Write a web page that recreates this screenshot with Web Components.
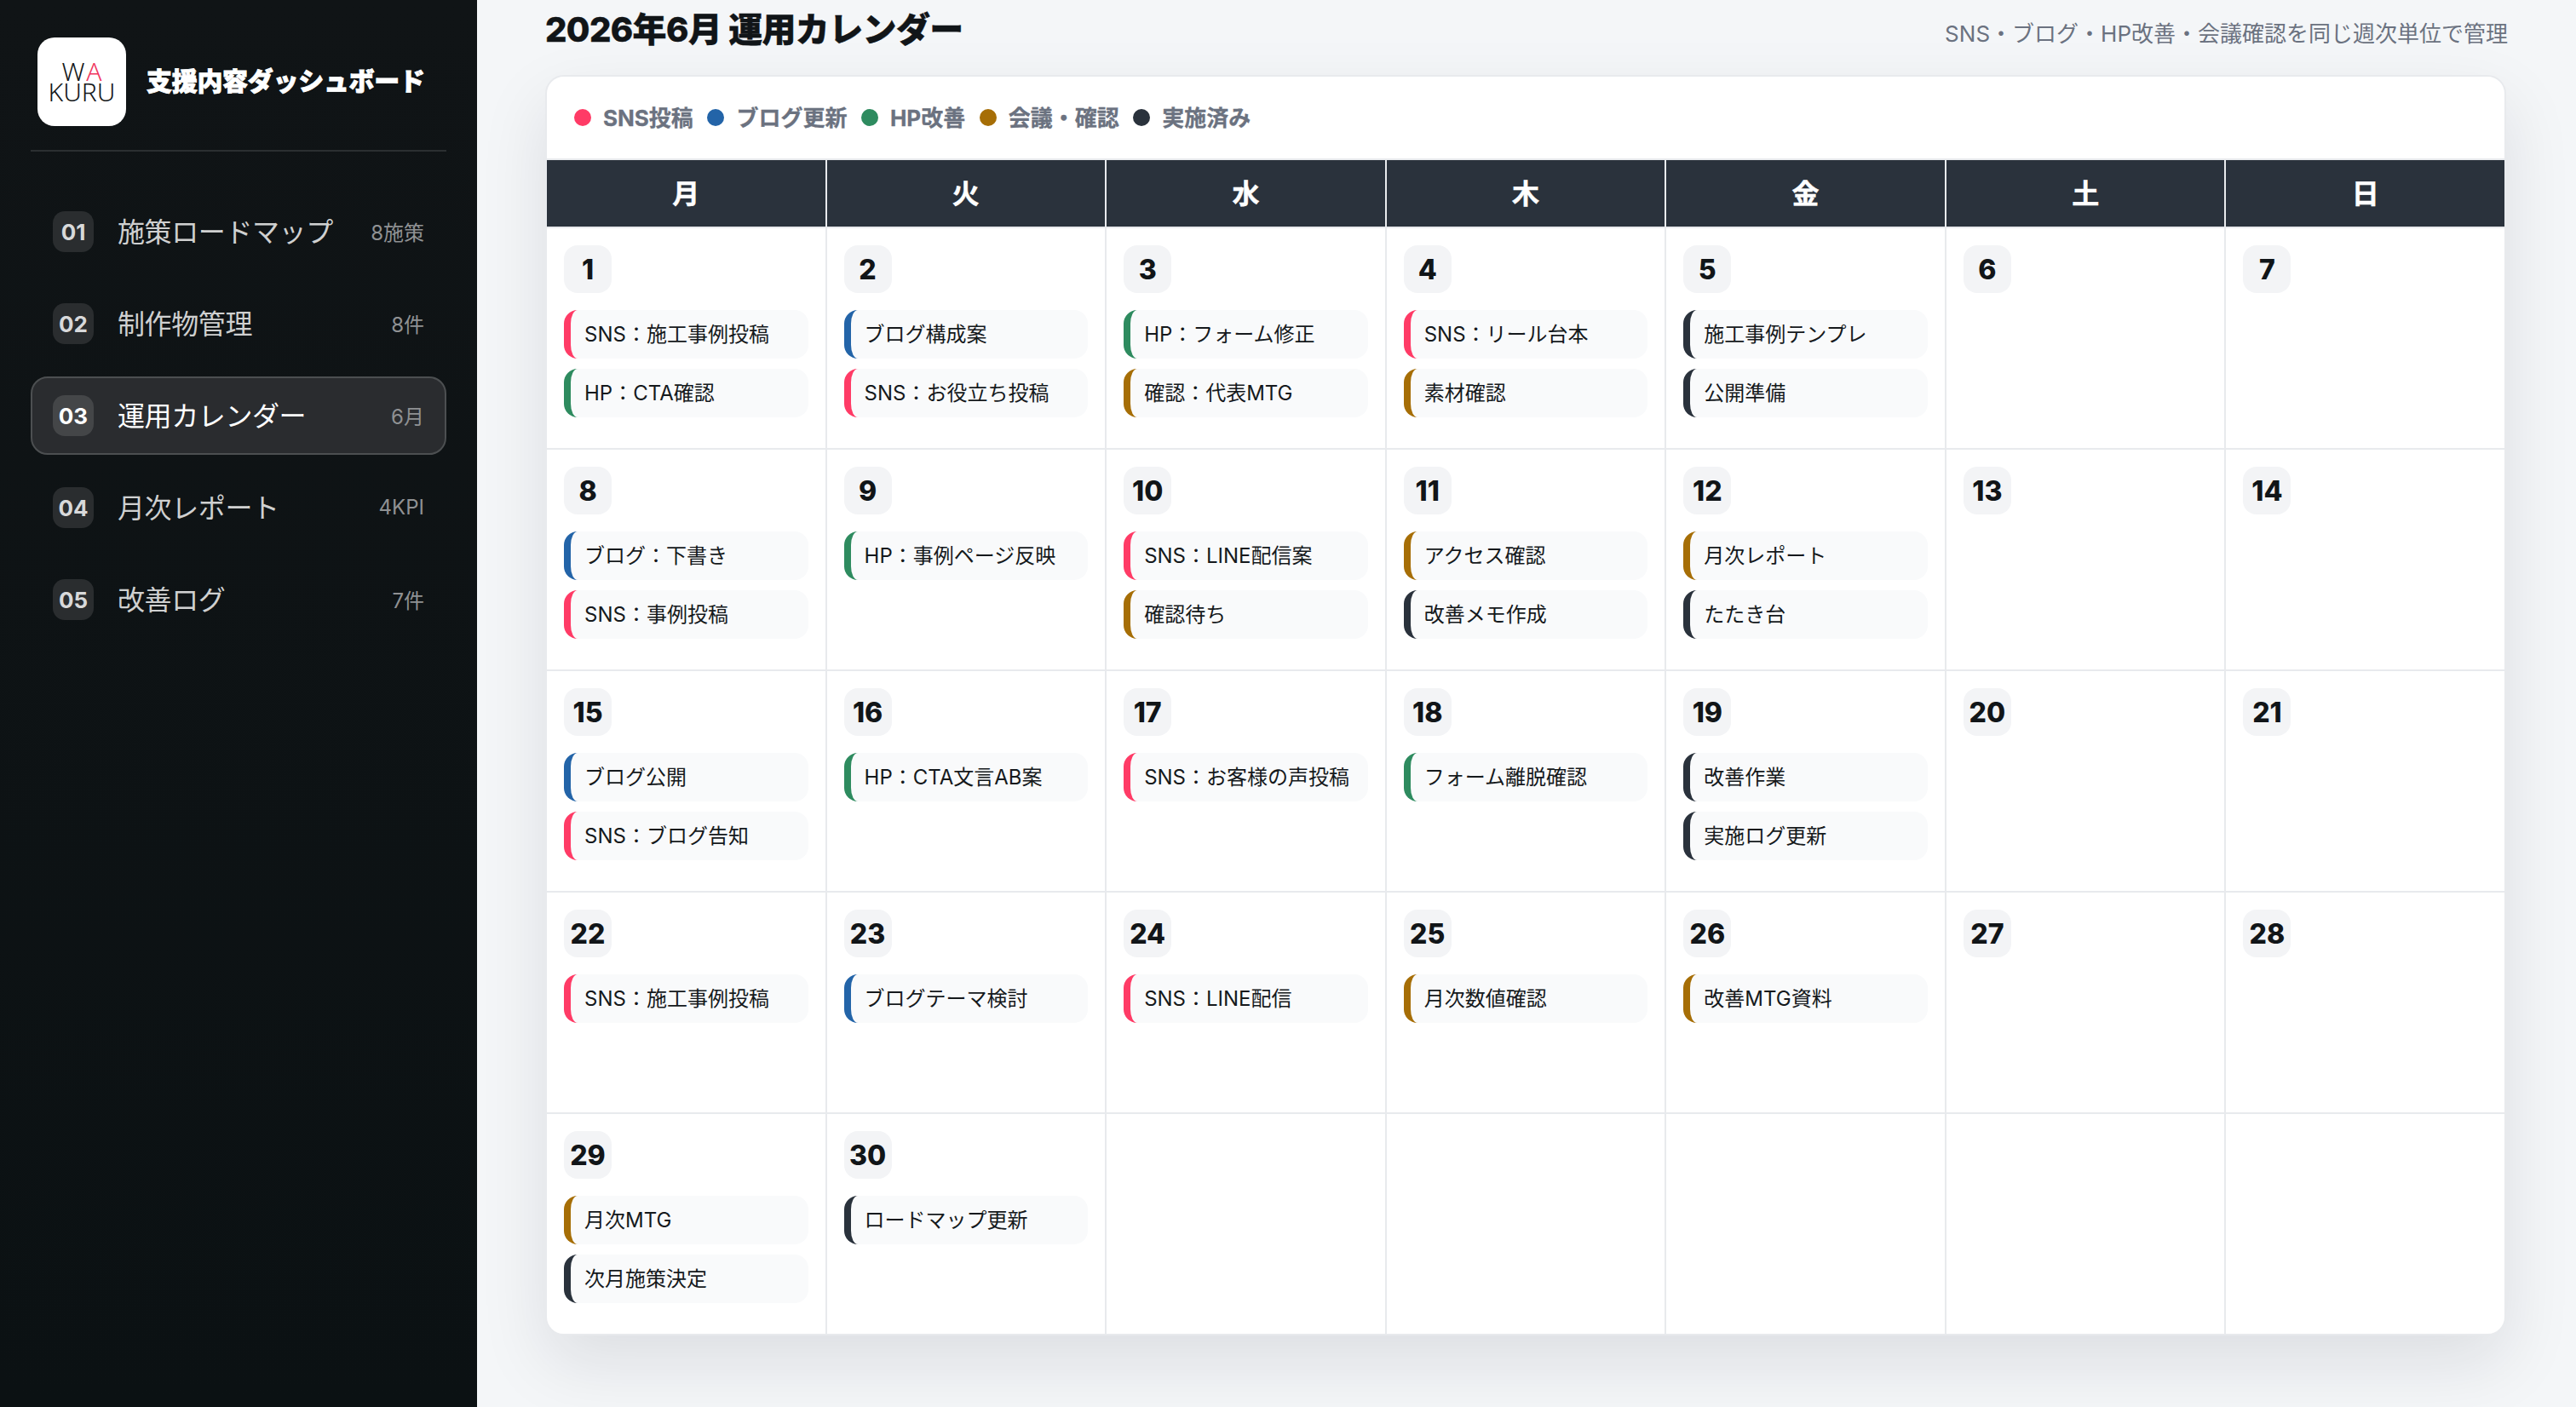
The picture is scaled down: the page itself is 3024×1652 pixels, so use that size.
<!DOCTYPE html>
<html lang="ja">
<head>
<meta charset="utf-8">
<title>運用カレンダー</title>
<style>
  html, body { margin: 0; height: 100%; }
  body {
    font-family: Inter, "Noto Sans CJK JP", sans-serif;
    background: #f4f6f8;
    color: #111518;
    overflow: hidden;
  }
</style>
</head>
<body>
<app-shell>
  <side-bar slot="side" title-text="支援内容ダッシュボード">
    <nav-item num="01" meta="8施策">施策ロードマップ</nav-item>
    <nav-item num="02" meta="8件">制作物管理</nav-item>
    <nav-item num="03" meta="6月" active>運用カレンダー</nav-item>
    <nav-item num="04" meta="4KPI">月次レポート</nav-item>
    <nav-item num="05" meta="7件">改善ログ</nav-item>
  </side-bar>
  <page-head>
    <span>2026年6月 運用カレンダー</span>
    <span slot="note">SNS・ブログ・HP改善・会議確認を同じ週次単位で管理</span>
  </page-head>
  <month-calendar></month-calendar>
</app-shell>

<script>
const COLORS = {
  sns: "#ff3b66",
  blog: "#2364a8",
  hp: "#2e8b5f",
  meet: "#a66e06",
  done: "#2a323c",
};

class AppShell extends HTMLElement {
  constructor() {
    super();
    this.attachShadow({ mode: "open" });
    this.shadowRoot.innerHTML = `
      <style>
        :host { display: flex; height: 100vh; overflow: hidden; }
        main { flex: 1; min-width: 0; padding: 8px 82px 0 80px; }
      </style>
      <slot name="side"></slot>
      <main><slot></slot></main>
    `;
  }
}

class SideBar extends HTMLElement {
  constructor() {
    super();
    this.attachShadow({ mode: "open" });
    this.shadowRoot.innerHTML = `
      <style>
        :host {
          display: block;
          flex: none;
          width: 560px;
          box-sizing: border-box;
          padding: 44px 36px;
          background: linear-gradient(180deg, #101416, #0b1113);
        }
        .brand {
          display: flex;
          align-items: center;
          gap: 24px;
          padding: 0 8px 28px;
          border-bottom: 2px solid #2b2f31;
          margin-bottom: 48px;
        }
        .logo {
          flex: none;
          width: 104px;
          height: 104px;
          border-radius: 20px;
          background: #fff;
          display: flex;
          flex-direction: column;
          align-items: center;
          justify-content: center;
          font-family: "Noto Sans", sans-serif;
          font-weight: 300;
          font-size: 30px;
          line-height: 24px;
          color: #15181a;
        }
        .logo .wa { letter-spacing: 3px; margin-right: -3px; }
        .logo em { font-style: normal; color: #f0385f; }
        h1 {
          margin: 0 0 6px;
          font-size: 30px;
          font-weight: 900;
          letter-spacing: -0.3px;
          color: #fff;
          -webkit-text-stroke: 0.8px #fff;
          white-space: nowrap;
        }
        nav { display: flex; flex-direction: column; gap: 16px; }
      </style>
      <div class="brand">
        <div class="logo"><span class="wa">W<em>A</em></span><span>KURU</span></div>
        <h1>${this.getAttribute("title-text") || ""}</h1>
      </div>
      <nav><slot></slot></nav>
    `;
  }
}

class NavItem extends HTMLElement {
  constructor() {
    super();
    this.attachShadow({ mode: "open" });
    this.shadowRoot.innerHTML = `
      <style>
        :host {
          display: flex;
          align-items: center;
          height: 92px;
          box-sizing: border-box;
          padding: 0 24px;
          border: 2px solid transparent;
          border-radius: 20px;
          color: #cfd0d0;
        }
        :host([active]) {
          background: #2a2c2f;
          border-color: #4c4f51;
          color: #fff;
        }
        .num {
          flex: none;
          width: 48px;
          height: 48px;
          border-radius: 14px;
          background: #2a2d2f;
          display: flex;
          align-items: center;
          justify-content: center;
          font-size: 26px;
          font-weight: 700;
          color: #d8d9da;
        }
        :host([active]) .num { background: #444648; color: #fff; }
        .label {
          flex: 1;
          margin: 0 0 4px 28px;
          font-size: 32px;
          letter-spacing: -0.4px;
          white-space: nowrap;
        }
        .meta { flex: none; margin-bottom: 2px; font-size: 24px; color: #8f9193; }
      </style>
      <span class="num">${this.getAttribute("num")}</span>
      <span class="label"><slot></slot></span>
      <span class="meta">${this.getAttribute("meta")}</span>
    `;
  }
}

class PageHead extends HTMLElement {
  constructor() {
    super();
    this.attachShadow({ mode: "open" });
    this.shadowRoot.innerHTML = `
      <style>
        :host {
          display: flex;
          justify-content: space-between;
          align-items: flex-end;
          height: 54px;
          margin-bottom: 26px;
        }
        .title {
          font-size: 40px;
          font-weight: 800;
          letter-spacing: -0.65px;
          line-height: 54px;
          color: #111518;
          -webkit-text-stroke: 0.4px #111518;
        }
        .note { font-size: 26px; color: #6b7280; line-height: 36px; margin: 0 -2px 4px 0; }
      </style>
      <div class="title"><slot></slot></div>
      <div class="note"><slot name="note"></slot></div>
    `;
  }
}

class LegendItem extends HTMLElement {
  constructor() {
    super();
    this.attachShadow({ mode: "open" });
    this.shadowRoot.innerHTML = `
      <style>
        :host {
          display: inline-flex;
          align-items: center;
          gap: 14px;
          font-size: 26px;
          font-weight: 700;
          color: #6b7280;
        }
        i { width: 20px; height: 20px; border-radius: 50%; background: ${this.getAttribute("color")}; }
        span { margin-bottom: 4px; -webkit-text-stroke: 0.3px #6b7280; }
      </style>
      <i></i><span><slot></slot></span>
    `;
  }
}

class CalDay extends HTMLElement {
  constructor() {
    super();
    this.attachShadow({ mode: "open" });
    const day = this.getAttribute("day");
    this.shadowRoot.innerHTML = `
      <style>
        :host {
          display: block;
          box-sizing: border-box;
          background: #fff;
          padding: 20px;
          min-width: 0;
        }
        .day {
          display: flex;
          align-items: center;
          justify-content: center;
          width: 56px;
          height: 56px;
          margin-bottom: 20px;
          border-radius: 16px;
          background: #f3f4f6;
          font-size: 32px;
          font-weight: 800;
          color: #111518;
        }
        .list { display: flex; flex-direction: column; gap: 12px; }
      </style>
      ${day ? `<div class="day">${day}</div>` : ""}
      <div class="list"><slot></slot></div>
    `;
  }
}

class CalEvent extends HTMLElement {
  constructor() {
    super();
    this.attachShadow({ mode: "open" });
    this.shadowRoot.innerHTML = `
      <style>
        :host {
          display: flex;
          align-items: center;
          height: 57px;
          box-sizing: border-box;
          padding: 0 0 4px 16px;
          border-left: 8px solid ${COLORS[this.getAttribute("kind")]};
          border-radius: 16px;
          background: #f9fafb;
          font-size: 24px;
          color: #15191c;
          white-space: nowrap;
          overflow: hidden;
        }
      </style>
      <slot></slot>
    `;
  }
}

const WEEK = ["月", "火", "水", "木", "金", "土", "日"];
const EVENTS = {
  1: [["sns", "SNS：施工事例投稿"], ["hp", "HP：CTA確認"]],
  2: [["blog", "ブログ構成案"], ["sns", "SNS：お役立ち投稿"]],
  3: [["hp", "HP：フォーム修正"], ["meet", "確認：代表MTG"]],
  4: [["sns", "SNS：リール台本"], ["meet", "素材確認"]],
  5: [["done", "施工事例テンプレ"], ["done", "公開準備"]],
  8: [["blog", "ブログ：下書き"], ["sns", "SNS：事例投稿"]],
  9: [["hp", "HP：事例ページ反映"]],
  10: [["sns", "SNS：LINE配信案"], ["meet", "確認待ち"]],
  11: [["meet", "アクセス確認"], ["done", "改善メモ作成"]],
  12: [["meet", "月次レポート"], ["done", "たたき台"]],
  15: [["blog", "ブログ公開"], ["sns", "SNS：ブログ告知"]],
  16: [["hp", "HP：CTA文言AB案"]],
  17: [["sns", "SNS：お客様の声投稿"]],
  18: [["hp", "フォーム離脱確認"]],
  19: [["done", "改善作業"], ["done", "実施ログ更新"]],
  22: [["sns", "SNS：施工事例投稿"]],
  23: [["blog", "ブログテーマ検討"]],
  24: [["sns", "SNS：LINE配信"]],
  25: [["meet", "月次数値確認"]],
  26: [["meet", "改善MTG資料"]],
  29: [["meet", "月次MTG"], ["done", "次月施策決定"]],
  30: [["done", "ロードマップ更新"]],
};

class MonthCalendar extends HTMLElement {
  constructor() {
    super();
    this.attachShadow({ mode: "open" });
    let days = "";
    for (let d = 1; d <= 35; d++) {
      const label = d <= 30 ? d : "";
      const items = (EVENTS[d] || [])
        .map(([kind, text]) => `<cal-event kind="${kind}">${text}</cal-event>`)
        .join("");
      days += `<cal-day day="${label}">${items}</cal-day>`;
    }
    this.shadowRoot.innerHTML = `
      <style>
        :host {
          display: block;
          height: 1480px;
          box-sizing: border-box;
          border: 2px solid #e8eaed;
          border-radius: 22px;
          background: #fff;
          overflow: hidden;
          box-shadow: 0 32px 80px rgba(17, 24, 39, 0.1);
        }
        .legend {
          display: flex;
          align-items: center;
          gap: 16.5px;
          height: 96px;
          padding: 0 32px;
          border-bottom: 2px solid #e8eaed;
        }
        .grid {
          display: grid;
          grid-template-columns: repeat(7, minmax(0, 1fr));
          grid-template-rows: 78px repeat(5, 258px);
          gap: 2px;
          background: #e8eaed;
        }
        .dow {
          display: flex;
          align-items: center;
          justify-content: center;
          padding-bottom: 4px;
          box-sizing: border-box;
          background: #2a323c;
          color: #fff;
          font-size: 32px;
          font-weight: 700;
          -webkit-text-stroke: 0.5px #fff;
        }
      </style>
      <div class="legend">
        <legend-item color="${COLORS.sns}">SNS投稿</legend-item>
        <legend-item color="${COLORS.blog}">ブログ更新</legend-item>
        <legend-item color="${COLORS.hp}">HP改善</legend-item>
        <legend-item color="${COLORS.meet}">会議・確認</legend-item>
        <legend-item color="${COLORS.done}">実施済み</legend-item>
      </div>
      <div class="grid">
        ${WEEK.map((w) => `<div class="dow">${w}</div>`).join("")}
        ${days}
      </div>
    `;
  }
}

customElements.define("app-shell", AppShell);
customElements.define("side-bar", SideBar);
customElements.define("nav-item", NavItem);
customElements.define("page-head", PageHead);
customElements.define("legend-item", LegendItem);
customElements.define("cal-event", CalEvent);
customElements.define("cal-day", CalDay);
customElements.define("month-calendar", MonthCalendar);
</script>
</body>
</html>
